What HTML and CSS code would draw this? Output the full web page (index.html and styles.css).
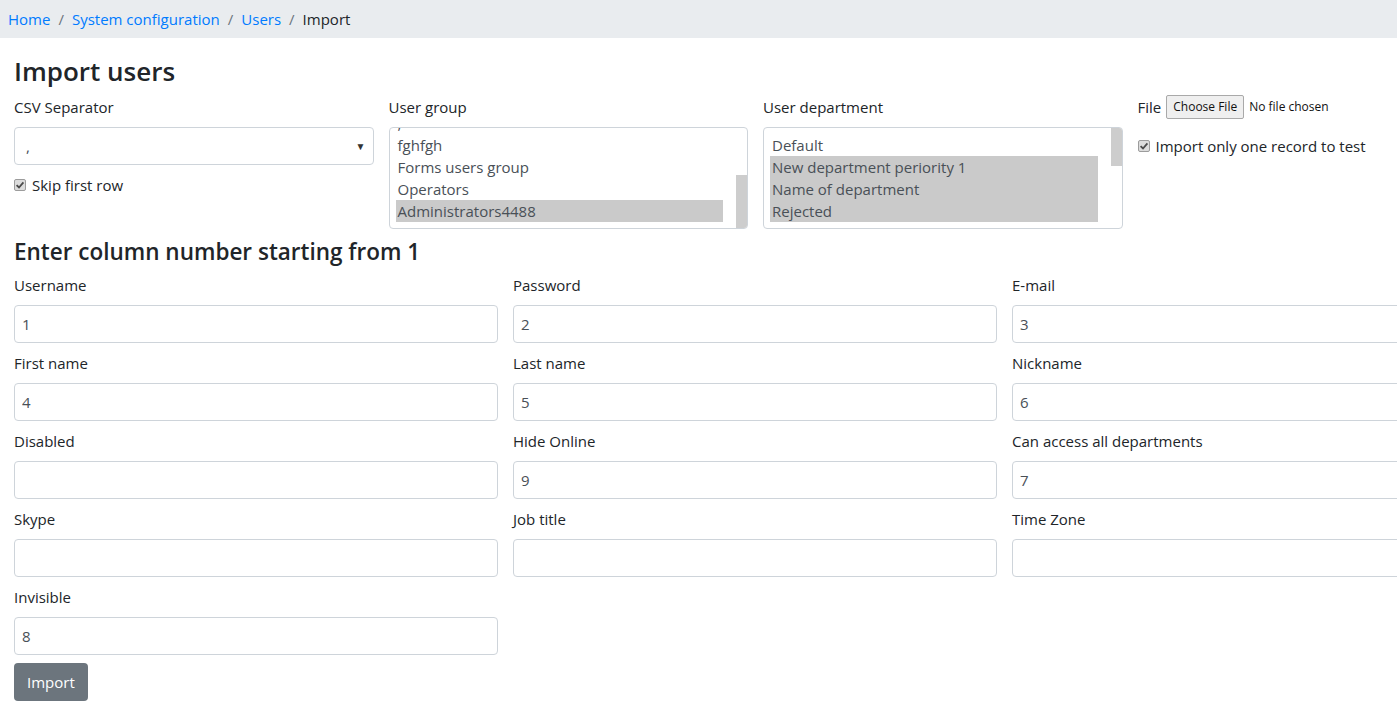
FILE: index.html
```html
<!DOCTYPE html>
<html lang="en">
<head>
<meta charset="utf-8">
<title>Import users</title>
<link rel="stylesheet" href="styles.css">
</head>
<body>
<nav class="breadcrumb">
  <a href="#">Home</a><span class="sep">/</span>
  <a href="#">System configuration</a><span class="sep">/</span>
  <a href="#">Users</a><span class="sep">/</span>
  <span class="current">Import</span>
</nav>
<main class="page">
  <h1 class="title">Import users</h1>
  <div class="top-row">
    <div class="group">
      <label class="lbl">CSV Separator</label>
      <div class="select"><span class="select-val">,</span><span class="caret">&#9660;</span></div>
      <label class="check">
        <svg class="cb" width="12" height="12" viewBox="0 0 12 12"><rect x="0.5" y="0.5" width="11" height="11" rx="1.5" fill="#dcdcdc" stroke="#9c9c9c"/><path d="M2.6 6.1 L5 8.5 L9.4 3.3" stroke="#4a4a4a" stroke-width="1.8" fill="none"/></svg>
        Skip first row
      </label>
    </div>
    <div class="group">
      <label class="lbl">User group</label>
      <div class="listbox">
        <div class="options">
          <div class="opt shift">,</div>
          <div class="opt">fghfgh</div>
          <div class="opt">Forms users group</div>
          <div class="opt">Operators</div>
          <div class="opt sel">Administrators4488</div>
        </div>
        <div class="scrollbar"><div class="thumb thumb-bottom"></div></div>
      </div>
    </div>
    <div class="group">
      <label class="lbl">User department</label>
      <div class="listbox">
        <div class="options">
          <div class="opt">Default</div>
          <div class="opt sel">New department periority 1</div>
          <div class="opt sel">Name of department</div>
          <div class="opt sel">Rejected</div>
          <div class="opt">Invalid</div>
        </div>
        <div class="scrollbar"><div class="thumb thumb-top"></div></div>
      </div>
    </div>
    <div class="group">
      <div class="file-row">
        <span class="file-lbl">File</span>
        <span class="file-btn">Choose File</span>
        <span class="file-name">No file chosen</span>
      </div>
      <label class="check check-file">
        <svg class="cb" width="12" height="12" viewBox="0 0 12 12"><rect x="0.5" y="0.5" width="11" height="11" rx="1.5" fill="#dcdcdc" stroke="#9c9c9c"/><path d="M2.6 6.1 L5 8.5 L9.4 3.3" stroke="#4a4a4a" stroke-width="1.8" fill="none"/></svg>
        Import only one record to test
      </label>
    </div>
  </div>

  <h2 class="subtitle">Enter column number starting from 1</h2>
  <div class="fields">
    <div class="field"><label class="lbl">Username</label><input class="input" value="1"></div>
    <div class="field"><label class="lbl">Password</label><input class="input" value="2"></div>
    <div class="field"><label class="lbl">E-mail</label><input class="input" value="3"></div>
    <div class="field"><label class="lbl">First name</label><input class="input" value="4"></div>
    <div class="field"><label class="lbl">Last name</label><input class="input" value="5"></div>
    <div class="field"><label class="lbl">Nickname</label><input class="input" value="6"></div>
    <div class="field"><label class="lbl">Disabled</label><input class="input" value=""></div>
    <div class="field"><label class="lbl">Hide Online</label><input class="input" value="9"></div>
    <div class="field"><label class="lbl">Can access all departments</label><input class="input" value="7"></div>
    <div class="field"><label class="lbl">Skype</label><input class="input" value=""></div>
    <div class="field"><label class="lbl">Job title</label><input class="input" value=""></div>
    <div class="field"><label class="lbl">Time Zone</label><input class="input" value=""></div>
    <div class="field"><label class="lbl">Invisible</label><input class="input" value="8"></div>
  </div>
  <button class="btn">Import</button>
</main>
</body>
</html>
```
FILE: styles.css
```css
html, body {
  margin: 0;
  overflow: hidden;
}
body {
  font-family: "Open Sans", "Noto Sans", sans-serif;
  font-size: 15px;
  line-height: 24px;
  color: #212529;
  background: #fff;
}
.breadcrumb {
  display: flex;
  align-items: center;
  height: 38px;
  box-sizing: border-box;
  padding: 7px 8px;
  background: #e9ecef;
  margin-bottom: 16px;
}
.breadcrumb a {
  color: #007bff;
  text-decoration: none;
}
.sep {
  color: #6c757d;
  padding: 0 8px;
}
.current {
  color: #212529;
}
.page {
  width: 1482px;
  padding-left: 14px;
}
.title {
  font-size: 26px;
  font-weight: 600;
  line-height: 34px;
  margin: 0 0 7px;
}
.top-row {
  display: grid;
  grid-template-columns: repeat(4, 359.5px);
  column-gap: 15px;
  align-items: start;
}
.lbl {
  display: block;
  margin-bottom: 8px;
}
.select {
  height: 38px;
  box-sizing: border-box;
  border: 1px solid #ced4da;
  border-radius: 4px;
  display: flex;
  align-items: center;
  justify-content: space-between;
  padding: 0 7px 0 11px;
  color: #495057;
}
.caret {
  font-size: 10px;
  color: #333;
}
.check {
  display: flex;
  align-items: center;
  gap: 6px;
  margin-top: 8px;
  color: #212529;
}
.cb {
  flex: none;
}
.check-file {
  margin-top: 15px;
}
.listbox {
  height: 102px;
  box-sizing: border-box;
  border: 1px solid #ced4da;
  border-radius: 4px;
  display: flex;
  overflow: hidden;
}
.options {
  flex: 1;
  padding: 6px 13px 0 6px;
  min-width: 0;
}
.opt {
  line-height: 22px;
  padding: 0 2px;
  white-space: nowrap;
  color: #495057;
}
.opt.shift {
  margin-top: -22px;
}
.opt.sel {
  background: #cacaca;
}
.scrollbar {
  width: 11px;
  display: flex;
  flex-direction: column;
}
.thumb {
  background: #cdcdcd;
}
.thumb-bottom {
  margin-top: auto;
  height: 53px;
}
.thumb-top {
  height: 38px;
}
.file-row {
  display: flex;
  align-items: center;
  height: 24px;
}
.file-lbl {
  margin-right: 5px;
}
.file-btn {
  font-size: 12px;
  line-height: 20px;
  padding: 1px 6px;
  border: 1px solid #a9a9a9;
  border-radius: 2px;
  background: #efefef;
  color: #111;
}
.file-name {
  font-size: 12px;
  margin-left: 5px;
  color: #111;
}
.subtitle {
  font-size: 22.5px;
  font-weight: 600;
  line-height: 28px;
  margin: 9px 0 7px;
}
.fields {
  display: grid;
  grid-template-columns: repeat(3, 484px);
  column-gap: 15px;
}
.field {
  margin-bottom: 8px;
}
.input {
  display: block;
  width: 100%;
  height: 38px;
  box-sizing: border-box;
  border: 1px solid #ced4da;
  border-radius: 4px;
  padding: 0 7px;
  font-family: "Open Sans", "Noto Sans", sans-serif;
  font-size: 15px;
  color: #495057;
  background: #fff;
}
.btn {
  display: block;
  height: 38px;
  padding: 0 13px;
  border: none;
  border-radius: 4px;
  background: #6c757d;
  color: #fff;
  font-family: "Open Sans", "Noto Sans", sans-serif;
  font-size: 15px;
}
```
